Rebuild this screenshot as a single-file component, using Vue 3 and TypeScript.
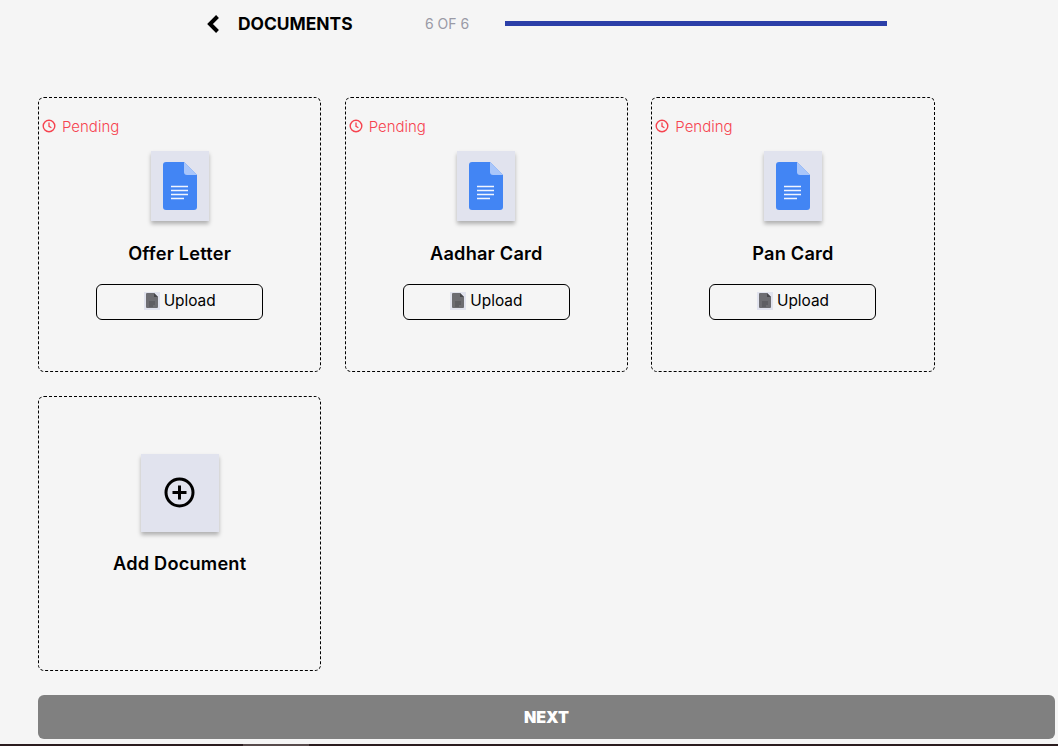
<script setup lang="ts">
const docs: string[] = ['Offer Letter', 'Aadhar Card', 'Pan Card']
</script>

<template>
  <div class="page">
    <header class="head">
      <svg class="back" width="14" height="18" viewBox="0 0 14 18" aria-hidden="true">
        <path d="M11.5 1.5 L4 9 L11.5 16.5" fill="none" stroke="#000" stroke-width="4" />
      </svg>
      <h1 class="title">DOCUMENTS</h1>
      <span class="count">6 OF 6</span>
      <div class="bar"></div>
    </header>

    <main class="grid">
      <section v-for="doc in docs" :key="doc" class="card">
        <div class="status">
          <svg width="14" height="14" viewBox="0 0 14 14" aria-hidden="true">
            <circle cx="7" cy="7" r="5.8" fill="none" stroke="#f6434f" stroke-width="1.4" />
            <path d="M7 3.6 V7.3 L9.4 8.7" fill="none" stroke="#f6434f" stroke-width="1.3" />
          </svg>
          <span>Pending</span>
        </div>
        <div class="tile">
          <svg width="34" height="48" viewBox="0 0 34 48" aria-hidden="true">
            <path d="M3 0 H21 L34 13 V45 a3 3 0 0 1 -3 3 H3 a3 3 0 0 1 -3 -3 V3 a3 3 0 0 1 3 -3 Z" fill="#4285f4" />
            <path d="M21 0 L34 13 H24 a3 3 0 0 1 -3 -3 Z" fill="#a9c6fa" />
            <path d="M8 24.5 H25 M8 28.5 H25 M8 32.5 H25 M8 36.5 H21" stroke="#f1f5fe" stroke-width="1.5" />
          </svg>
        </div>
        <h2 class="name">{{ doc }}</h2>
        <button class="upload" type="button">
          <span class="mini">
            <svg width="12" height="15" viewBox="0 0 12 15" aria-hidden="true">
              <path d="M1 0 H8 L12 4 V14 a1 1 0 0 1 -1 1 H1 a1 1 0 0 1 -1 -1 V1 a1 1 0 0 1 1 -1 Z" fill="#6d6d72" />
              <path d="M8 0 L12 4 H8 Z" fill="#47474b" />
              <path d="M3 9 H9 M3 11 H9 M3 13 H7" stroke="#505054" stroke-width="1" />
            </svg>
          </span>
          <span>Upload</span>
        </button>
      </section>

      <section class="card add">
        <div class="tile big">
          <svg width="32" height="32" viewBox="0 0 32 32" aria-hidden="true">
            <circle cx="15.5" cy="15.5" r="13.5" fill="none" stroke="#000" stroke-width="3" />
            <path d="M15.5 8.5 V22.5 M8.5 15.5 H22.5" stroke="#000" stroke-width="3" />
          </svg>
        </div>
        <h2 class="name">Add Document</h2>
      </section>
    </main>

    <button class="next" type="button">NEXT</button>
    <div class="strip"><span class="strip-lit"></span></div>
  </div>
</template>

<style>
html, body { margin: 0; background: #f5f5f5; }
</style>

<style scoped>
.page {
  width: 1058px;
  height: 746px;
  overflow: hidden;
  display: flex;
  flex-direction: column;
  padding-left: 38px;
  box-sizing: border-box;
  background: #f5f5f5;
  font-family: "Inter", "Liberation Sans", sans-serif;
  color: #000;
}
.head {
  height: 47px;
  margin-bottom: 50px;
  display: flex;
  align-items: center;
  padding-left: 168px;
}
.back { flex: none; }
.title {
  margin: 0 0 0 18px;
  width: 187px;
  font-size: 17.4px;
  font-weight: 700;
}
.count { width: 80px; font-size: 14px; color: #9a9aa6; }
.bar { width: 382px; height: 5px; background: #2b3fa8; }
.grid {
  display: grid;
  grid-template-columns: repeat(3, 283.33px);
  grid-auto-rows: 275px;
  column-gap: 23.33px;
  row-gap: 24px;
}
.card {
  box-sizing: border-box;
  border: 1px dashed #000;
  border-radius: 6px;
  display: flex;
  flex-direction: column;
  align-items: center;
}
.status {
  align-self: flex-start;
  display: flex;
  align-items: center;
  gap: 6px;
  margin: 20px 0 0 3px;
  height: 16px;
  color: #f6434f;
  font-size: 15px;
  font-weight: 300;
}
.tile {
  box-sizing: border-box;
  width: 58px;
  height: 70px;
  margin-top: 17px;
  display: flex;
  align-items: center;
  justify-content: center;
  background: #e1e3ee;
  box-shadow: 0 3px 4px rgba(0, 0, 0, 0.28);
}
.tile.big { width: 78px; height: 78px; margin-top: 57px; }
.name {
  margin: 21px 0 0;
  font-size: 18.2px;
  line-height: 22px;
  font-weight: 600;
  letter-spacing: 0.2px;
}
.add .name { margin-top: 20px; }
.upload {
  box-sizing: border-box;
  width: 167px;
  height: 36px;
  margin-top: 20px;
  border: 1px solid #000;
  border-radius: 6px;
  background: transparent;
  display: flex;
  align-items: center;
  justify-content: center;
  gap: 4px;
  padding: 0 0 3px;
  font-family: inherit;
  font-size: 15.4px;
  color: #000;
}
.mini {
  width: 16px;
  height: 18px;
  display: flex;
  align-items: center;
  justify-content: center;
  background: #e1e3ee;
}
.next {
  width: 1017px;
  height: 44px;
  margin-top: 24px;
  border: 0;
  border-radius: 6px;
  background: #808080;
  color: #fff;
  font-family: inherit;
  font-size: 16px;
  font-weight: 900;
}
.strip {
  height: 2px;
  margin: 5px 0 0 -38px;
  width: 1058px;
  background: #2a1c1e;
  padding-left: 243px;
  box-sizing: border-box;
}
.strip-lit { display: block; width: 66px; height: 2px; background: #574a4b; }
</style>
